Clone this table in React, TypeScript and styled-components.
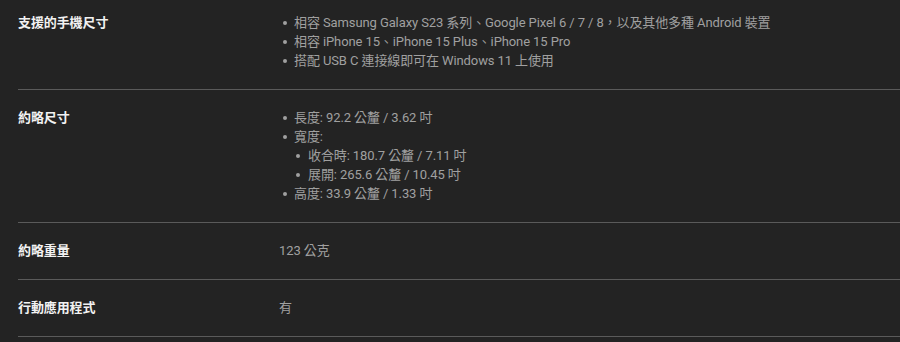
import React from "react";
import styled, { createGlobalStyle } from "styled-components";

const Global = createGlobalStyle`
  html, body { margin: 0; padding: 0; background: #232323; }
  body { font-family: Roboto, "Noto Sans CJK TC", sans-serif; }
`;

const Table = styled.div`
  padding-left: 18px;
  background: #232323;
  width: 882px;
`;

const Row = styled.div<{ $first?: boolean }>`
  display: grid;
  grid-template-columns: 261px 1fr;
  align-items: start;
  padding: ${(p) => (p.$first ? "13px" : "18px")} 0 19px;
  border-bottom: 1px solid #5a5a5a;
  font-size: 13px;
  line-height: 19px;
  letter-spacing: -0.1px;
`;

const Label = styled.div`
  color: #f2f2f2;
  font-weight: 700;
  height: 19px;
`;

const Value = styled.div`
  color: #a0a0a0;
`;

const Line = styled.div`
  height: 19px;
`;

const List = styled.ul`
  list-style: none;
  margin: 0;
  padding: 0;
`;

const Item = styled.li<{ $nested?: boolean }>`
  position: relative;
  padding-left: ${(p) => (p.$nested ? "14px" : "15px")};
  &::before {
    content: "";
    position: absolute;
    left: ${(p) => (p.$nested ? "2px" : "4px")};
    top: 8px;
    width: 4px;
    height: 4px;
    border-radius: 50%;
    background: #a0a0a0;
  }
`;

export default function App() {
  return (
    <>
      <Global />
      <Table>
        <Row $first>
          <Label>支援的手機尺寸</Label>
          <Value>
            <List>
              <Item>相容 Samsung Galaxy S23 系列、Google Pixel 6 / 7 / 8，以及其他多種 Android 裝置</Item>
              <Item>相容 iPhone 15、iPhone 15 Plus、iPhone 15 Pro</Item>
              <Item>搭配 USB C 連接線即可在 Windows 11 上使用</Item>
            </List>
          </Value>
        </Row>
        <Row>
          <Label>約略尺寸</Label>
          <Value>
            <List>
              <Item>長度: 92.2 公釐 / 3.62 吋</Item>
              <Item>
                寬度:
                <List>
                  <Item $nested>收合時: 180.7 公釐 / 7.11 吋</Item>
                  <Item $nested>展開: 265.6 公釐 / 10.45 吋</Item>
                </List>
              </Item>
              <Item>高度: 33.9 公釐 / 1.33 吋</Item>
            </List>
          </Value>
        </Row>
        <Row>
          <Label>約略重量</Label>
          <Value>
            <Line>123 公克</Line>
          </Value>
        </Row>
        <Row>
          <Label>行動應用程式</Label>
          <Value>
            <Line>有</Line>
          </Value>
        </Row>
      </Table>
    </>
  );
}
